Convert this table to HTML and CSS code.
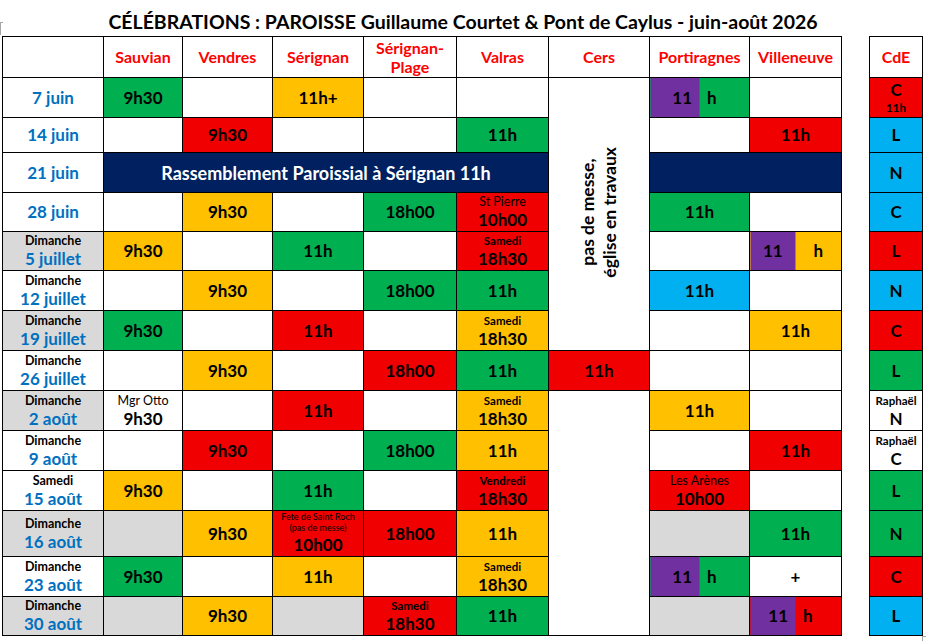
FILE: index.html
```html
<!DOCTYPE html>
<html lang="fr">
<head>
<meta charset="utf-8">
<title>Célébrations juin-août 2026</title>
<link rel="stylesheet" href="styles.css">
</head>
<body>
<div class="page">
  <span class="mark mark-tl"></span>
  <h1 class="title">CÉLÉBRATIONS : PAROISSE Guillaume Courtet &amp; Pont de Caylus - juin-août 2026</h1>
  <table class="grid">
    <colgroup>
      <col class="c-date"><col class="c-sau"><col class="c-ven"><col class="c-ser"><col class="c-sp">
      <col class="c-val"><col class="c-cers"><col class="c-por"><col class="c-vil"><col class="c-gap"><col class="c-cde">
    </colgroup>
    <thead>
      <tr class="h41">
        <th></th><th>Sauvian</th><th>Vendres</th><th>Sérignan</th><th class="two">Sérignan-<br>Plage</th>
        <th>Valras</th><th>Cers</th><th>Portiragnes</th><th>Villeneuve</th><th class="gap"></th><th>CdE</th>
      </tr>
    </thead>
    <tbody>
      <tr class="h40">
        <td class="date">7 juin</td>
        <td class="g">9h30</td><td></td><td class="y">11h+</td><td></td><td></td>
        <td class="cers-closed" rowspan="7"><div class="vtext">pas de messe,<br>église en travaux</div></td>
        <td class="split pg"><div class="halves"><span class="hr">11</span><span class="hl">h</span></div></td>
        <td></td><td class="gap"></td>
        <td class="r stack"><span class="big">C</span><span class="sm">11h</span></td>
      </tr>
      <tr class="h35">
        <td class="date">14 juin</td>
        <td></td><td class="r">9h30</td><td></td><td></td><td class="g">11h</td>
        <td></td><td class="r">11h</td><td class="gap"></td><td class="b">L</td>
      </tr>
      <tr class="h40">
        <td class="date">21 juin</td>
        <td class="n banner" colspan="5">Rassemblement Paroissial à Sérignan 11h</td>
        <td class="n" colspan="2"></td><td class="gap"></td><td class="b">N</td>
      </tr>
      <tr class="h39">
        <td class="date">28 juin</td>
        <td></td><td class="y">9h30</td><td></td><td class="g">18h00</td>
        <td class="r stack"><span class="sm reg">St Pierre</span><span class="big">10h00</span></td>
        <td class="g">11h</td><td></td><td class="gap"></td><td class="b">C</td>
      </tr>
      <tr class="h39">
        <td class="date gr stack"><span class="sm">Dimanche</span><span class="big">5 juillet</span></td>
        <td class="y">9h30</td><td></td><td class="g">11h</td><td></td>
        <td class="r stack"><span class="sm">Samedi</span><span class="big">18h30</span></td>
        <td></td>
        <td class="split py"><div class="halves"><span>11</span><span>h</span></div></td>
        <td class="gap"></td><td class="r">L</td>
      </tr>
      <tr class="h40">
        <td class="date stack"><span class="sm">Dimanche</span><span class="big">12 juillet</span></td>
        <td></td><td class="y">9h30</td><td></td><td class="g">18h00</td><td class="g">11h</td>
        <td class="b">11h</td><td></td><td class="gap"></td><td class="b">N</td>
      </tr>
      <tr class="h40">
        <td class="date gr stack"><span class="sm">Dimanche</span><span class="big">19 juillet</span></td>
        <td class="g">9h30</td><td></td><td class="r">11h</td><td></td>
        <td class="y stack"><span class="sm">Samedi</span><span class="big">18h30</span></td>
        <td></td><td class="y">11h</td><td class="gap"></td><td class="r">C</td>
      </tr>
      <tr class="h40">
        <td class="date stack"><span class="sm">Dimanche</span><span class="big">26 juillet</span></td>
        <td></td><td class="y">9h30</td><td></td><td class="r">18h00</td><td class="g">11h</td>
        <td class="r">11h</td><td></td><td></td><td class="gap"></td><td class="g">L</td>
      </tr>
      <tr class="h40">
        <td class="date gr stack"><span class="sm">Dimanche</span><span class="big">2 août</span></td>
        <td class="stack"><span class="sm reg">Mgr Otto</span><span class="big">9h30</span></td>
        <td></td><td class="r">11h</td><td></td>
        <td class="y stack"><span class="sm">Samedi</span><span class="big">18h30</span></td>
        <td rowspan="7"></td>
        <td class="y">11h</td><td></td><td class="gap"></td>
        <td class="stack"><span class="sm">Raphaël</span><span class="big">N</span></td>
      </tr>
      <tr class="h40">
        <td class="date stack"><span class="sm">Dimanche</span><span class="big">9 août</span></td>
        <td></td><td class="r">9h30</td><td></td><td class="g">18h00</td><td class="y">11h</td>
        <td></td><td class="r">11h</td><td class="gap"></td>
        <td class="stack"><span class="sm">Raphaël</span><span class="big">C</span></td>
      </tr>
      <tr class="h40">
        <td class="date stack"><span class="sm">Samedi</span><span class="big">15 août</span></td>
        <td class="y">9h30</td><td></td><td class="g">11h</td><td></td>
        <td class="r stack"><span class="sm">Vendredi</span><span class="big">18h30</span></td>
        <td class="r stack"><span class="sm reg">Les Arènes</span><span class="big">10h00</span></td>
        <td></td><td class="gap"></td><td class="g">L</td>
      </tr>
      <tr class="h45">
        <td class="date gr stack"><span class="sm">Dimanche</span><span class="big">16 août</span></td>
        <td class="gr"></td><td class="y">9h30</td>
        <td class="r stack tight"><span class="xs">Fete de Saint Roch</span><span class="xs">(pas de messe)</span><span class="big">10h00</span></td>
        <td class="r">18h00</td><td class="y">11h</td>
        <td class="gr"></td><td class="g">11h</td><td class="gap"></td><td class="g">N</td>
      </tr>
      <tr class="h40">
        <td class="date stack"><span class="sm">Dimanche</span><span class="big">23 août</span></td>
        <td class="g">9h30</td><td></td><td class="y">11h</td><td></td>
        <td class="y stack"><span class="sm">Samedi</span><span class="big">18h30</span></td>
        <td class="split pg"><div class="halves"><span class="hr">11</span><span class="hl">h</span></div></td>
        <td>+</td><td class="gap"></td><td class="r">C</td>
      </tr>
      <tr class="h39">
        <td class="date gr stack"><span class="sm">Dimanche</span><span class="big">30 août</span></td>
        <td class="gr"></td><td class="y">9h30</td><td class="gr"></td>
        <td class="r stack"><span class="sm">Samedi</span><span class="big">18h30</span></td>
        <td class="g">11h</td>
        <td class="gr"></td>
        <td class="split pr"><div class="halves"><span class="hr">11</span><span class="hl">h</span></div></td>
        <td class="gap"></td><td class="b">L</td>
      </tr>
    </tbody>
  </table>
  <span class="mark mark-br"></span>
</div>
</body>
</html>
```
FILE: styles.css
```css
* { box-sizing: border-box; }

html, body {
  margin: 0;
  padding: 0;
  background: #ffffff;
}

body {
  font-family: Lato, "Noto Sans", "Liberation Sans", sans-serif;
  color: #000;
}

.page {
  position: relative;
  width: 926px;
  height: 641px;
  overflow: hidden;
}

.title {
  margin: 0;
  height: 36px;
  padding-top: 10px;
  font-size: 19.5px;
  line-height: 23px;
  font-weight: 700;
  text-align: center;
  color: #000;
}

.grid {
  margin-left: 2px;
  border-collapse: collapse;
  table-layout: fixed;
  width: 920px;
}

.c-date { width: 101px; }
.c-sau { width: 79px; }
.c-ven { width: 90px; }
.c-ser { width: 91px; }
.c-sp { width: 93px; }
.c-val { width: 92px; }
.c-cers { width: 101px; }
.c-por { width: 100px; }
.c-vil { width: 92px; }
.c-gap { width: 28px; }
.c-cde { width: 53px; }

.grid th,
.grid td {
  border: 1px solid #000;
  padding: 0;
  text-align: center;
  vertical-align: middle;
  font-weight: 700;
  font-size: 17px;
  line-height: 20px;
  overflow: hidden;
  white-space: nowrap;
}

.grid th {
  color: #ff0000;
  font-size: 16px;
}

.grid th.two {
  line-height: 19px;
}

.grid .gap {
  border: none;
  background: #fff;
}

.h41 { height: 41px; }
.h40 { height: 40px; }
.h39 { height: 39px; }
.h35 { height: 35px; }
.h45 { height: 45px; }

/* colours */
.g { background: #00b050; }
.y { background: #ffc000; }
.r { background: #f00000; }
.b { background: #00b0f0; }
.n { background: #002060; }
.gr { background: #d9d9d9; }

.date {
  color: #0070c0;
}

.grid .banner {
  color: #fff;
  font-size: 18px;
}

/* stacked cells */
.stack .sm,
.stack .big,
.stack .xs {
  display: block;
}

.stack .sm {
  font-size: 11.5px;
  line-height: 16px;
  color: #000;
}

.date .sm {
  font-size: 12.5px;
}

.stack .sm.reg {
  font-weight: 400;
  font-size: 12.5px;
}

.stack .big {
  line-height: 20px;
}

.stack.tight {
  vertical-align: top;
}

.stack .xs {
  font-size: 9px;
  font-weight: 400;
  line-height: 11px;
}

.stack.tight .big {
  line-height: 23px;
}

/* split cells */
.split.pg { background: linear-gradient(90deg, #7030a0 50%, #00b050 50%); }
.split.py { background: linear-gradient(90deg, #7030a0 50%, #ffc000 50%); }
.split.pr { background: linear-gradient(90deg, #7030a0 50%, #f00000 50%); }

.halves {
  display: flex;
}

.halves span {
  flex: 1 1 0;
  text-align: center;
}

.halves .hr {
  text-align: right;
  padding-right: 7px;
}

.halves .hl {
  text-align: left;
  padding-left: 8px;
}

/* Cers closed column */
.cers-closed {
  background: #fff;
}

.vtext {
  display: inline-block;
  writing-mode: vertical-rl;
  transform: rotate(180deg);
  font-size: 17.5px;
  line-height: 22px;
  text-align: center;
  white-space: nowrap;
}

/* spreadsheet selection corner marks */
.mark {
  position: absolute;
  border-color: #a6a6a6;
  border-style: solid;
}

.mark-tl {
  left: 0;
  top: 22px;
  width: 3px;
  height: 13px;
  border-width: 1px 0 0 0;
  border-left: 1px solid #a6a6a6;
}

.mark-br {
  left: 922px;
  top: 636px;
  width: 4px;
  height: 5px;
  border-width: 1px 0 0 1px;
}
```
